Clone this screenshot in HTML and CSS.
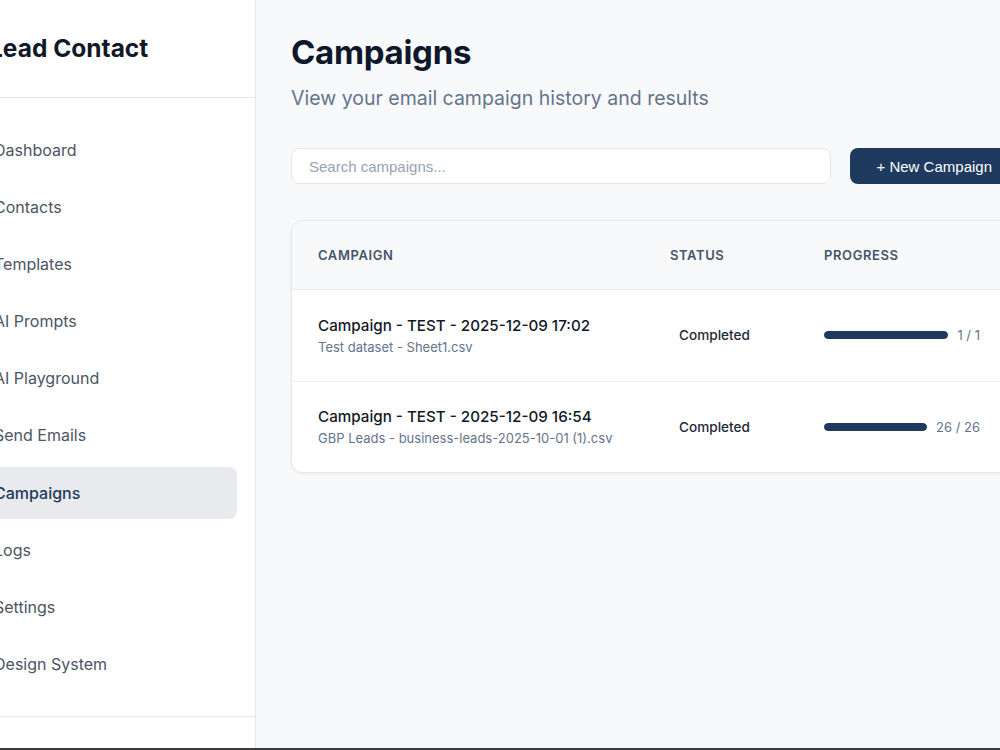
FILE: index.html
```html
<!DOCTYPE html>
<html lang="en">
<head>
    <meta charset="UTF-8">
    <meta name="viewport" content="width=device-width, initial-scale=1.0">
    <title>Campaigns - Lead Contact</title>
    <link rel="stylesheet" href="styles.css">
</head>
<body>

    <div class="app">
        <aside class="sidebar">
            <div class="brand">Lead Contact</div>

            <nav class="nav">
                <a href="#" class="nav-item">Dashboard</a>
                <a href="#" class="nav-item">Contacts</a>
                <a href="#" class="nav-item">Templates</a>
                <a href="#" class="nav-item">AI Prompts</a>
                <a href="#" class="nav-item">AI Playground</a>
                <a href="#" class="nav-item">Send Emails</a>
                <a href="#" class="nav-item active">Campaigns</a>
                <a href="#" class="nav-item">Logs</a>
                <a href="#" class="nav-item">Settings</a>
                <a href="#" class="nav-item">Design System</a>
            </nav>

            <div class="sidebar-footer"></div>
        </aside>

        <main class="main">
            <div class="content">
                <h1 class="page-title">Campaigns</h1>
                <p class="page-subtitle">View your email campaign history and results</p>

                <div class="toolbar">
                    <input type="text" class="search" placeholder="Search campaigns...">
                    <button type="button" class="btn-primary">+ New Campaign</button>
                </div>

                <div class="card">
                    <table class="campaigns">
                        <colgroup>
                            <col class="col-name">
                            <col class="col-status">
                            <col>
                        </colgroup>
                        <thead>
                            <tr>
                                <th>Campaign</th>
                                <th>Status</th>
                                <th>Progress</th>
                            </tr>
                        </thead>
                        <tbody>
                            <tr>
                                <td>
                                    <div class="camp-name">Campaign - TEST - 2025-12-09 17:02</div>
                                    <div class="camp-source">Test dataset - Sheet1.csv</div>
                                </td>
                                <td><span class="status">Completed</span></td>
                                <td>
                                    <div class="progress">
                                        <div class="bar"><div class="fill" style="width: 100%"></div></div>
                                        <span class="count">1 / 1</span>
                                    </div>
                                </td>
                            </tr>
                            <tr>
                                <td>
                                    <div class="camp-name">Campaign - TEST - 2025-12-09 16:54</div>
                                    <div class="camp-source">GBP Leads - business-leads-2025-10-01 (1).csv</div>
                                </td>
                                <td><span class="status">Completed</span></td>
                                <td>
                                    <div class="progress">
                                        <div class="bar"><div class="fill" style="width: 100%"></div></div>
                                        <span class="count">26 / 26</span>
                                    </div>
                                </td>
                            </tr>
                        </tbody>
                    </table>
                </div>
            </div>
        </main>
    </div>

</body>
</html>
```

FILE: styles.css
```css
* {
    box-sizing: border-box;
}

body {
    margin: 0;
    font-family: Inter, "Noto Sans", sans-serif;
    background-color: #3b3b3b; /* thin dark edge at the bottom */
    overflow: hidden;
    color: #0f172a;
}

.app {
    display: flex;
    height: 748px;
    margin-left: -40px;
    width: 1100px;
}

/* Sidebar */
.sidebar {
    width: 296px;
    flex-shrink: 0;
    background-color: #ffffff;
    border-right: 1px solid #e5e7eb;
    display: flex;
    flex-direction: column;
}

.brand {
    padding: 32px 29px;
    font-size: 24.5px;
    line-height: 33px;
    font-weight: 700;
    color: #111827;
    border-bottom: 1px solid #e5e7eb;
}

.nav {
    display: flex;
    flex-direction: column;
    gap: 5.1px;
    padding: 26px 18px;
    border-bottom: 1px solid #e5e7eb;
}

.nav-item {
    display: block;
    padding: 16px 14px 16px 16px;
    font-size: 16px;
    line-height: 20px;
    color: #4b5563;
    text-decoration: none;
    border-radius: 8px;
}

.nav-item.active {
    background-color: #e8eaee;
    color: #1e3a5f;
    font-weight: 500;
}

.sidebar-footer {
    flex: 1;
}

/* Main area */
.main {
    flex: 1;
    background-color: #f8f9fb;
    padding: 32px 35px;
}

.content {
    width: 728px;
}

.page-title {
    margin: 0;
    font-size: 33px;
    line-height: 40px;
    font-weight: 700;
    color: #0f172a;
    letter-spacing: -0.3px;
}

.page-subtitle {
    margin: 12px 0 36px;
    font-size: 19.5px;
    line-height: 28px;
    color: #64748b;
}

.toolbar {
    display: flex;
    gap: 19px;
    margin-bottom: 36px;
}

.search {
    flex: 1;
    height: 36px;
    padding: 0 17px;
    border: 1px solid #e5e7eb;
    border-radius: 8px;
    background-color: #ffffff;
    font-family: "Liberation Sans", Arial, sans-serif;
    font-size: 15px;
    color: #0f172a;
}

.search::placeholder {
    color: #94a3b8;
}

.btn-primary {
    height: 36px;
    padding: 0 27px;
    border: none;
    border-radius: 8px;
    background-color: #1e3a5f;
    color: #ffffff;
    font-family: "Liberation Sans", Arial, sans-serif;
    font-size: 15px;
    white-space: nowrap;
}

/* Table card */
.card {
    background-color: #ffffff;
    border: 1px solid #e5e7eb;
    border-radius: 12px;
    overflow: hidden;
    box-shadow: 0 1px 3px rgba(15, 23, 42, 0.06);
}

.campaigns {
    width: 100%;
    border-collapse: collapse;
    table-layout: fixed;
}

.col-name {
    width: 352px;
}

.col-status {
    width: 154px;
}

.campaigns th {
    height: 68px;
    padding: 0 26px;
    text-align: left;
    font-size: 13px;
    font-weight: 600;
    letter-spacing: 0.6px;
    text-transform: uppercase;
    color: #475569;
    background-color: #f8f9fb;
    border-bottom: 1px solid #e5e7eb;
}

.campaigns td {
    height: 92px;
    padding: 0 26px;
    vertical-align: middle;
    border-bottom: 1px solid #eceef1;
}

.campaigns tbody tr:last-child td {
    border-bottom: none;
    height: 91px;
}

.camp-name {
    font-size: 15.2px;
    line-height: 22px;
    font-weight: 500;
    color: #111827;
    white-space: nowrap;
}

.camp-source {
    margin-top: 1px;
    font-size: 13px;
    line-height: 18px;
    color: #64748b;
    white-space: nowrap;
}

.status {
    display: inline-block;
    padding: 4px 9px;
    font-size: 13.6px;
    font-weight: 500;
    color: #1f2937;
}

.progress {
    display: flex;
    align-items: center;
    gap: 9px;
    width: 156px;
}

.bar {
    flex: 1;
    height: 8px;
    border-radius: 4px;
    background-color: #e5e7eb;
    overflow: hidden;
}

.fill {
    height: 100%;
    background-color: #1e3a5f;
    border-radius: 4px;
}

.count {
    font-size: 13px;
    color: #64748b;
    white-space: nowrap;
}
```
